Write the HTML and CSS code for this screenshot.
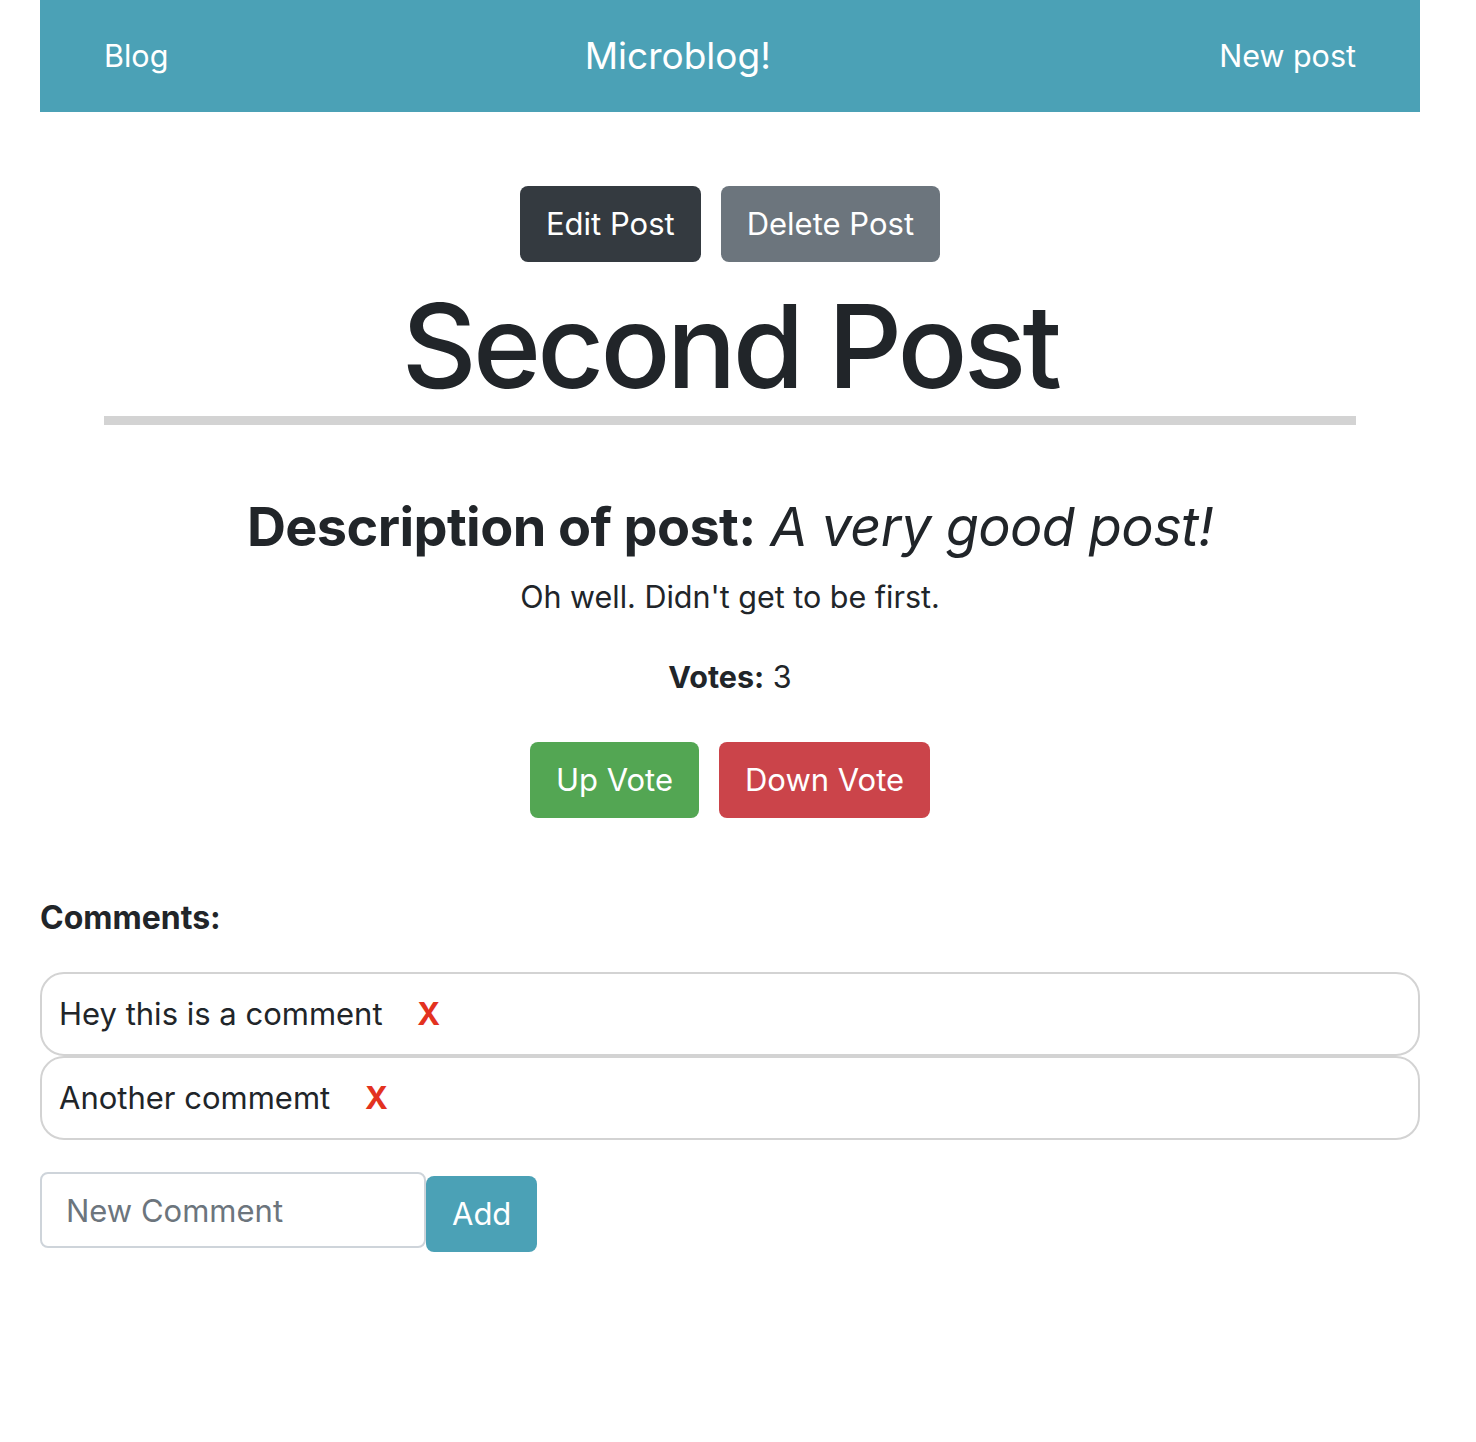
FILE: index.html
```html
<!DOCTYPE html>
<html lang="en">
<head>
<meta charset="utf-8">
<title>Microblog!</title>
<link rel="stylesheet" href="styles.css">
</head>
<body>
<div class="page">
  <nav class="navbar">
    <a class="nav-link" href="#">Blog</a>
    <a class="brand" href="#">Microblog!</a>
    <a class="nav-link" href="#">New post</a>
  </nav>
  <main class="post">
    <div class="actions">
      <button class="btn btn-dark">Edit Post</button>
      <button class="btn btn-secondary">Delete Post</button>
    </div>
    <h1 class="title">Second Post</h1>
    <hr class="rule">
    <h3 class="desc"><b>Description of post:</b> <i>A very good post!</i></h3>
    <p class="body-text">Oh well. Didn't get to be first.</p>
    <p class="votes"><b>Votes:</b> 3</p>
    <div class="actions vote-actions">
      <button class="btn btn-success">Up Vote</button>
      <button class="btn btn-danger">Down Vote</button>
    </div>
  </main>
  <section class="comments">
    <p class="comments-label">Comments:</p>
    <ul class="comment-list">
      <li class="comment">Hey this is a comment <span class="remove">X</span></li>
      <li class="comment">Another commemt <span class="remove">X</span></li>
    </ul>
    <form class="comment-form">
      <input class="comment-input" type="text" placeholder="New Comment">
      <button class="btn btn-info" type="button">Add</button>
    </form>
  </section>
</div>
</body>
</html>
```
FILE: styles.css
```css
* { box-sizing: border-box; }
html, body { margin: 0; padding: 0; background: #fff; }
body {
  font-family: Inter, "Noto Sans", sans-serif;
  color: #212529;
  font-size: 32px;
  line-height: 1.5;
}
.page {
  width: 1380px;
  margin-left: 40px;
}
.navbar {
  height: 112px;
  background: #4ba1b6;
  display: flex;
  align-items: center;
  justify-content: space-between;
  padding: 0 64px 0 64px;
}
.navbar a { color: #fff; text-decoration: none; }
.nav-link { font-size: 30.5px; }
.brand { font-size: 37px; margin-right: 32px; }

.post { text-align: center; padding-top: 74px; }
.actions { display: flex; justify-content: center; gap: 20px; }
.btn {
  font-family: inherit;
  font-size: 31px;
  line-height: 48px;
  padding: 12px 24px;
  border: 2px solid transparent;
  border-radius: 8px;
  color: #fff;
  cursor: pointer;
}
.btn-dark { background: #343a40; }
.btn-secondary { background: #6c757d; }
.btn-success { background: #53a653; }
.btn-danger { background: #cb444a; }
.btn-info { background: #4ba1b6; }

.title {
  font-size: 116px;
  font-weight: 500;
  line-height: 128px;
  margin: 20px 0 0;
  letter-spacing: -3.8px;
}
.rule {
  margin: 6px 64px 0;
  border: 0;
  height: 9px;
  background: #d3d3d3;
}
.desc {
  font-size: 54px;
  font-weight: 400;
  line-height: 1.2;
  margin: 70px 0 0;
  letter-spacing: -0.6px;
}
.desc b { font-weight: 700; }
.body-text { margin: 14px 0 0; font-size: 30.5px; }
.votes { margin: 34px 0 0; font-size: 30.5px; }
.vote-actions { margin-top: 43px; }

.comments { padding-top: 76px; }
.comments-label { margin: 0; font-weight: 700; font-size: 32px; line-height: 48px; }
.comment-list { list-style: none; margin: 30px 0 0; padding: 0; }
.comment {
  border: 2px solid #d3d3d3;
  border-radius: 24px;
  padding: 16px 17px;
  font-size: 31px;
  line-height: 48px;
}
.remove { color: #e3321f; font-weight: 700; margin-left: 26px; }
.comment-form { display: flex; align-items: flex-start; margin-top: 32px; }
.comment-input {
  width: 386px;
  height: 76px;
  border: 2px solid #ced4da;
  border-radius: 8px;
  padding: 0 24px;
  font-family: inherit;
  font-size: 31px;
  color: #495057;
}
.comment-input::placeholder { color: #6c757d; }
.btn-info { margin-top: 4px; }
```
